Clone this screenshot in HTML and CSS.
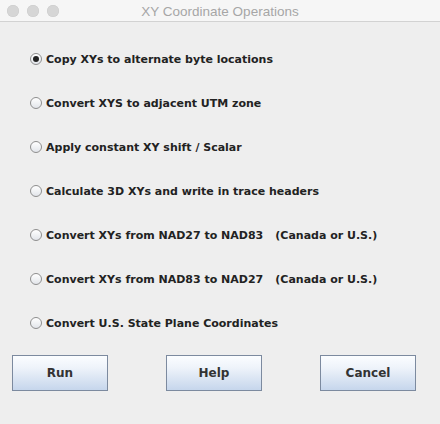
FILE: index.html
```html
<!DOCTYPE html>
<html>
<head>
<meta charset="utf-8">
<link rel="stylesheet" href="styles.css">
</head>
<body>
<div class="window">
  <div class="titlebar">
    <div class="lights"><span class="light"></span><span class="light"></span><span class="light"></span></div>
    <div class="title">XY Coordinate Operations</div>
  </div>
  <div class="content">
    <div class="options">
      <label class="opt"><span class="radio checked"></span><span class="lbl">Copy XYs to alternate byte locations</span></label>
      <label class="opt"><span class="radio"></span><span class="lbl">Convert XYS to adjacent UTM zone</span></label>
      <label class="opt"><span class="radio"></span><span class="lbl">Apply constant XY shift / Scalar</span></label>
      <label class="opt"><span class="radio"></span><span class="lbl">Calculate 3D XYs and write in trace headers</span></label>
      <label class="opt"><span class="radio"></span><span class="lbl">Convert XYs from NAD27 to NAD83<span class="gap"></span>(Canada or U.S.)</span></label>
      <label class="opt"><span class="radio"></span><span class="lbl">Convert XYs from NAD83 to NAD27<span class="gap"></span>(Canada or U.S.)</span></label>
      <label class="opt"><span class="radio"></span><span class="lbl">Convert U.S. State Plane Coordinates</span></label>
    </div>
    <div class="buttons">
      <button class="btn">Run</button>
      <button class="btn">Help</button>
      <button class="btn">Cancel</button>
    </div>
  </div>
</div>
</body>
</html>
```
FILE: styles.css
```css
html, body {
  margin: 0;
  padding: 0;
  background: #eeeeee;
}
.window {
  width: 440px;
  height: 424px;
  background: #eeeeee;
  font-family: "DejaVu Sans", "Liberation Sans", sans-serif;
}
.titlebar {
  height: 21px;
  background: #f6f6f6;
  border-bottom: 1px solid #d2d2d2;
  position: relative;
  display: flex;
  align-items: center;
  justify-content: center;
}
.lights {
  position: absolute;
  left: 7px;
  top: 5px;
  display: flex;
  gap: 8px;
}
.light {
  width: 12px;
  height: 12px;
  border-radius: 50%;
  background: #d6d6d6;
  box-shadow: inset 0 0 0 0.5px #cbcbcb;
}
.title {
  font-family: "Liberation Sans", "Helvetica", sans-serif;
  font-size: 13.5px;
  color: #a6a6a6;
  padding-top: 1px;
}
.content {
  padding: 0 0 0 30px;
}
.options {
  display: flex;
  flex-direction: column;
  gap: 30px;
  padding-top: 30px;
}
.opt {
  display: flex;
  align-items: center;
  height: 14px;
}
.radio {
  width: 12px;
  height: 12px;
  border-radius: 50%;
  border: 1px solid #8e8e8e;
  background: linear-gradient(#ffffff, #e2e5ea);
  box-sizing: border-box;
  margin-right: 4px;
  position: relative;
  flex: none;
}
.radio.checked::after {
  content: "";
  position: absolute;
  left: 2px;
  top: 2px;
  width: 6px;
  height: 6px;
  border-radius: 50%;
  background: #222;
}
.lbl {
  font-size: 11px;
  font-weight: bold;
  color: #222222;
  white-space: nowrap;
}
.gap {
  display: inline-block;
  width: 12px;
}
.buttons {
  display: flex;
  gap: 58px;
  margin-left: -18px;
  margin-top: 25px;
}
.btn {
  width: 96px;
  height: 36px;
  border: 1px solid #7c8a9f;
  background: linear-gradient(#fbfdff 0%, #eef3fa 35%, #c6d6ec 100%);
  font-family: "DejaVu Sans", "Liberation Sans", sans-serif;
  font-size: 12px;
  font-weight: bold;
  color: #333;
  padding: 0;
  margin: 0;
}
```
